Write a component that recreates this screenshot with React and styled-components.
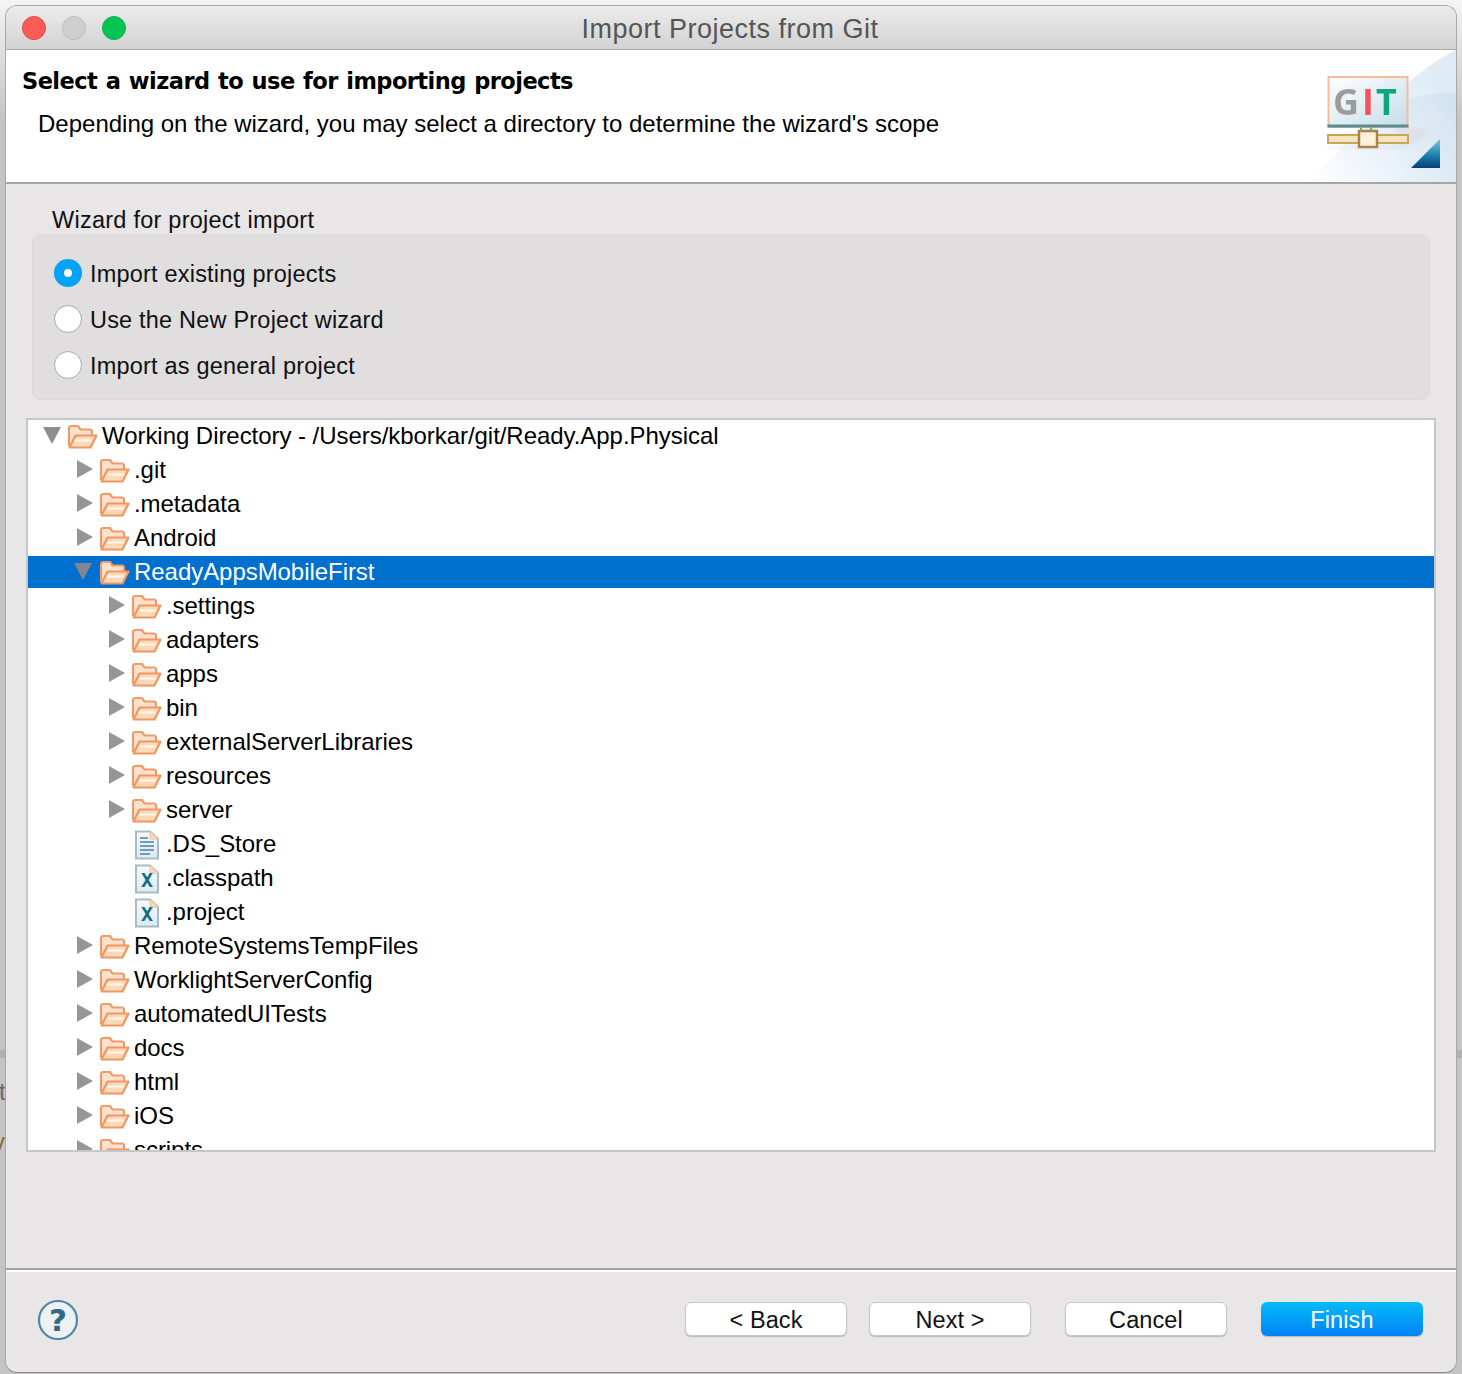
import React from 'react';
import styled, { createGlobalStyle } from 'styled-components';

const Global = createGlobalStyle`
  html, body { margin: 0; padding: 0; background: #f3f3f3; }
  #root { width: 1462px; height: 1374px; overflow: hidden; }
  * { box-sizing: border-box; }
`;
const Page = styled.div`
  position: relative;
  width: 1462px;
  height: 1374px;
  padding: 5px 5px 1px 5px;
  overflow: hidden;
  background: linear-gradient(
    #f4f4f4 0,
    #f0f0f0 10px,
    #c4c4c4 120px,
    #c4c4c4 1050px,
    #b0b0b0 1050px,
    #b0b0b0 1058px,
    #c4c4c4 1058px
  );
`;
const BehindLetter = styled.span`
  position: absolute;
  left: ${p => p.$x}px;
  top: ${p => p.$y}px;
  font: 24px "Liberation Sans", sans-serif;
  color: ${p => p.$c};
`;
const Win = styled.div`
  position: relative;
  height: 100%;
  display: flex;
  flex-direction: column;
  border-radius: 12px;
  overflow: hidden;
  border: 1px solid #a8a8a8;
  border-bottom-color: #8c8c8c;
  background: #e8e6e7;
  font-family: "Liberation Sans", Arial, sans-serif;
  color: #111;
`;
const TitleBar = styled.div`
  height: 44px;
  flex: none;
  position: relative;
  display: flex;
  align-items: center;
  justify-content: center;
  background: linear-gradient(#ececec, #d2d2d2);
  border-bottom: 1px solid #a9a9a9;
`;
const Lights = styled.div`
  position: absolute;
  left: 16px;
  top: 10px;
  display: flex;
  gap: 16px;
`;
const Light = styled.span`
  width: 24px;
  height: 24px;
  border-radius: 50%;
  background: ${p => p.$bg};
  border: 1px solid ${p => p.$bd};
`;
const TitleText = styled.div`
  font-size: 27px;
  letter-spacing: 0.5px;
  color: #555;
  margin: 4px 0 0 -2px;
`;
const Header = styled.div`
  height: 134px;
  flex: none;
  display: flex;
  justify-content: space-between;
  background: #fff;
  border-bottom: 2px solid #a6a6a6;
`;
const HeadText = styled.div`
  padding: 16px 0 0 16px;
`;
const HeadTitle = styled.div`
  font-family: "DejaVu Sans", sans-serif;
  font-weight: 700;
  font-size: 22.5px;
  line-height: 30px;
  color: #000;
  letter-spacing: -0.55px;
  word-spacing: 1.2px;
`;
const HeadSub = styled.div`
  margin: 13px 0 0 16px;
  font-size: 24px;
  line-height: 30px;
  color: #000;
`;
const Body = styled.div`
  flex: 1;
  min-height: 0;
  display: flex;
  flex-direction: column;
  padding: 22px 20px 0 20px;
`;
const GroupLabel = styled.div`
  margin-left: 26px;
  font-size: 23.5px;
  line-height: 28px;
  letter-spacing: 0.25px;
`;
const Group = styled.div`
  margin: 0 6px;
  height: 166px;
  padding: 25px 21px 0;
  display: flex;
  flex-direction: column;
  gap: 18px;
  background: #e0dedf;
  border: 1px solid #dad8d9;
  border-radius: 9px;
`;
const RadioRow = styled.div`
  display: flex;
  align-items: center;
  gap: 8px;
  height: 28px;
  font-size: 23.5px;
  letter-spacing: 0.2px;
`;
const Radio = styled.span`
  width: 28px;
  height: 28px;
  border-radius: 50%;
  display: flex;
  align-items: center;
  justify-content: center;
  margin-top: -2px;
  background: ${p => (p.$on ? '#05a3f5' : '#fff')};
  border: ${p => (p.$on ? 'none' : '1px solid #aaa')};
  &::after {
    content: '';
    display: ${p => (p.$on ? 'block' : 'none')};
    width: 8px;
    height: 8px;
    border-radius: 50%;
    background: #fff;
  }
`;
const Tree = styled.div`
  margin-top: 18px;
  height: 734px;
  background: #fff;
  border: 2px solid #c6c6c6;
  overflow: hidden;
  flex: none;
`;
const Rows = styled.div`
  margin-top: -1px;
`;
const Row = styled.div`
  height: 34px;
  position: relative;
  display: flex;
  align-items: center;
  padding-left: ${p => 13 + p.$level * 32 - (p.$level ? 1 : 0)}px;
  font-size: 24px;
  letter-spacing: -0.05px;
  color: ${p => (p.$sel ? '#fff' : '#000')};
  ${p => p.$sel && `
    background: linear-gradient(transparent 1px, #0070cf 1px, #0070cf 33px, transparent 33px);
  `}
`;
const Twisty = styled.svg`
  width: 22px;
  height: 22px;
  flex: none;
  margin-right: ${p => (p.$root ? 3 : 4)}px;
  margin-top: -2px;
`;
const TwistySpacer = styled.span`
  width: 26px;
  flex: none;
`;
const IconSlot = styled.svg`
  width: 32px;
  height: 30px;
  flex: none;
  margin-right: 4px;
  margin-top: 1px;
`;
const Footer = styled.div`
  height: 104px;
  flex: none;
  display: flex;
  align-items: center;
  justify-content: space-between;
  padding: 0 33px 0 31px;
  margin-top: auto;
  border-top: 2px solid #a3a3a3;
  box-shadow: inset 0 2px 0 #fff;
`;
const Help = styled.svg`
  width: 42px;
  height: 42px;
  margin-top: -2px;
`;
const Buttons = styled.div`
  display: flex;
  margin-top: -4px;
`;
const Btn = styled.div`
  width: 162px;
  height: 34px;
  margin-left: ${p => p.$ml}px;
  display: flex;
  align-items: center;
  justify-content: center;
  padding-top: 2px;
  border-radius: 6px;
  font-size: 23.5px;
  letter-spacing: 0.1px;
  color: ${p => (p.$primary ? '#fff' : '#111')};
  background: ${p => (p.$primary ? 'linear-gradient(#05bbf8, #0183f6)' : '#fff')};
  border: ${p => (p.$primary ? 'none' : '1px solid #c8c6c7')};
  box-shadow: 0 1px 1px rgba(0, 0, 0, 0.2);
`;

const Tri = ({ open, sel, root }) => (
  <Twisty viewBox="0 0 22 22" $root={root}>
    {open
      ? <polygon points="2,3 20,3 11,20" fill={sel ? '#7f8890' : '#8e8e8e'} />
      : <polygon points="5,2 21,11 5,20" fill="#969696" />}
  </Twisty>
);
const Folder = () => (
  <IconSlot viewBox="0 0 32 30">
    <path d="M3 24 V6.5 Q3 4 5.5 4 H12 L14.5 7.5 H24 Q26 7.5 26 10 V13" fill="#fde3cf" stroke="#f09a6a" strokeWidth="2.2" />
    <path d="M3.5 25.5 L9.5 13.5 H30.5 L24.5 25.5 Z" fill="#fed9b8" stroke="#ef9663" strokeWidth="2.2" strokeLinejoin="round" />
    <path d="M9 18.5 H26" stroke="#fff3e8" strokeWidth="2.4" />
  </IconSlot>
);
const Doc = ({ x }) => (
  <IconSlot viewBox="0 0 32 30">
    <defs>
      <linearGradient id="docFill" x1="0" y1="0" x2="0" y2="1">
        <stop offset="0" stopColor="#f6fafc" />
        <stop offset="1" stopColor="#dbe9f2" />
      </linearGradient>
    </defs>
    <path d="M6 1.5 H20 L28 9 V28.5 H6 Z" fill="url(#docFill)" stroke="#a9bac6" strokeWidth="2" />
    <path d="M20 1.5 L28 9 H20 Z" fill="#fbd9b8" stroke="#f0c4a0" strokeWidth="1" />
    {x
      ? <text x="17" y="23" textAnchor="middle" fontFamily="DejaVu Sans Mono" fontWeight="700" fontSize="20" fill="#156a82">X</text>
      : <path d="M10 8 H18 M10 12 H24 M10 16 H24 M10 20 H24 M10 24 H20" stroke="#6d9cbf" strokeWidth="2" />}
  </IconSlot>
);

const rows = [
  [0, 'o', 'Working Directory - /Users/kborkar/git/Ready.App.Physical'],
  [1, 'c', '.git'], [1, 'c', '.metadata'], [1, 'c', 'Android'],
  [1, 'o', 'ReadyAppsMobileFirst', true],
  [2, 'c', '.settings'], [2, 'c', 'adapters'], [2, 'c', 'apps'], [2, 'c', 'bin'],
  [2, 'c', 'externalServerLibraries'], [2, 'c', 'resources'], [2, 'c', 'server'],
  [2, 'd', '.DS_Store'], [2, 'x', '.classpath'], [2, 'x', '.project'],
  [1, 'c', 'RemoteSystemsTempFiles'], [1, 'c', 'WorklightServerConfig'], [1, 'c', 'automatedUITests'],
  [1, 'c', 'docs'], [1, 'c', 'html'], [1, 'c', 'iOS'], [1, 'c', 'scripts'],
];

const Banner = () => (
  <svg width="150" height="132" viewBox="0 0 150 132" style={{ flex: 'none' }}>
    <defs>
      <linearGradient id="sky" x1="0" y1="1" x2="1" y2="0.4">
        <stop offset="0" stopColor="#ffffff" />
        <stop offset="0.55" stopColor="#e6f0f8" />
        <stop offset="1" stopColor="#d2e3f1" />
      </linearGradient>
      <linearGradient id="screen" x1="0" y1="0" x2="1" y2="1">
        <stop offset="0" stopColor="#ffffff" />
        <stop offset="1" stopColor="#c4dde8" />
      </linearGradient>
      <linearGradient id="tri" x1="0" y1="0" x2="0" y2="1">
        <stop offset="0" stopColor="#7cc6dc" />
        <stop offset="0.6" stopColor="#1a7aa8" />
        <stop offset="1" stopColor="#083f74" />
      </linearGradient>
      <filter id="soft"><feGaussianBlur stdDeviation="0.6" /></filter>
      <filter id="softer"><feGaussianBlur stdDeviation="3" /></filter>
    </defs>
    <path d="M0 132 C50 90 90 30 150 0 V132 Z" fill="url(#sky)" />
    <path d="M72 62 C95 50 125 40 150 44 V0 C125 10 105 22 90 40 Z" fill="#ffffff" opacity="0.3" />
    <path d="M22 96 H92 L112 84 H90 V78 H100 L124 82 L96 98 H22 Z" fill="#dccfd8" opacity="0.7" filter="url(#softer)" />
    <rect x="22.5" y="27" width="79" height="50" fill="url(#screen)" stroke="#f5bd97" strokeWidth="2" />
    <path d="M21.5 76 H102.5" stroke="#578d96" strokeWidth="3" />
    <g filter="url(#soft)" fontFamily="Open Sans, sans-serif" fontWeight="700" fontSize="36">
      <text x="27" y="65" fill="#9c9c9c">G</text>
      <text x="56" y="65" fill="#f4525f">I</text>
      <text x="70" y="65" fill="#0ca77c">T</text>
    </g>
    <rect x="22" y="85" width="80" height="8" fill="#f3e6bd" stroke="#c9a560" strokeWidth="2" />
    <rect x="53" y="81" width="18" height="16" fill="#fff0d8" stroke="#a98448" strokeWidth="2.5" />
    <path d="M55 78 V81 M65 78 V81" stroke="#8fa06c" strokeWidth="2" />
    <path d="M134 89 V118 H105 Z" fill="url(#tri)" />
  </svg>
);

export default function App() {
  return (
    <Page>
      <Global />
      <BehindLetter $x={-1} $y={1078} $c="#6a6a6a">t</BehindLetter>
      <BehindLetter $x={-7} $y={1128} $c="#8a6a3a">v</BehindLetter>
      <Win>
        <TitleBar>
          <Lights>
            <Light $bg="#fc5b57" $bd="#e5483f" />
            <Light $bg="#cfcfcf" $bd="#bdbdbd" />
            <Light $bg="#05c452" $bd="#0cb148" />
          </Lights>
          <TitleText>Import Projects from Git</TitleText>
        </TitleBar>
        <Header>
          <HeadText>
            <HeadTitle>Select a wizard to use for importing projects</HeadTitle>
            <HeadSub>Depending on the wizard, you may select a directory to determine the wizard's scope</HeadSub>
          </HeadText>
          <Banner />
        </Header>
        <Body>
          <GroupLabel>Wizard for project import</GroupLabel>
          <Group>
            <RadioRow><Radio $on />Import existing projects</RadioRow>
            <RadioRow><Radio />Use the New Project wizard</RadioRow>
            <RadioRow><Radio />Import as general project</RadioRow>
          </Group>
          <Tree>
            <Rows>
              {rows.map(([lvl, kind, label, sel]) => (
                <Row key={label} $level={lvl} $sel={sel}>
                  {kind === 'o' || kind === 'c' ? <Tri open={kind === 'o'} sel={sel} root={lvl === 0} /> : <TwistySpacer />}
                  {kind === 'd' ? <Doc /> : kind === 'x' ? <Doc x /> : <Folder />}
                  {label}
                </Row>
              ))}
            </Rows>
          </Tree>
        </Body>
        <Footer>
          <Help viewBox="0 0 42 42">
            <circle cx="21" cy="21" r="19" fill="#eef1f3" stroke="#4f88a2" strokeWidth="2.2" />
            <text x="21" y="32" textAnchor="middle" fontFamily="DejaVu Sans" fontWeight="700" fontSize="31" fill="#2f6b88">?</text>
          </Help>
          <Buttons>
            <Btn>&lt; Back</Btn>
            <Btn $ml={22}>Next &gt;</Btn>
            <Btn $ml={34}>Cancel</Btn>
            <Btn $ml={34} $primary>Finish</Btn>
          </Buttons>
        </Footer>
      </Win>
    </Page>
  );
}
